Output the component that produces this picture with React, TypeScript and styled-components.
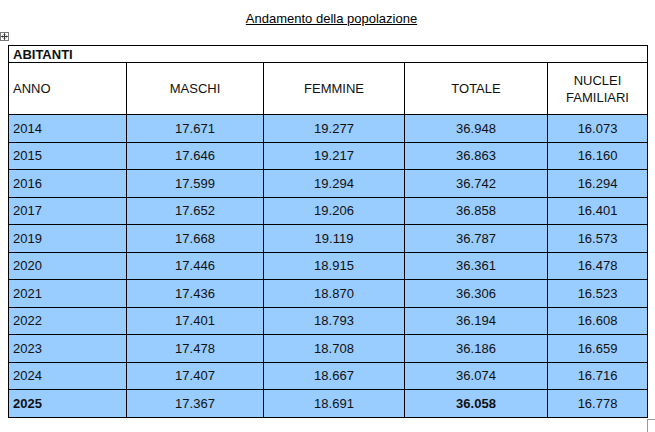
import React from "react";
import styled, { createGlobalStyle } from "styled-components";

type Row = {
  year: string;
  males: string;
  females: string;
  total: string;
  households: string;
  bold?: boolean;
};

const rows: Array<Row> = [
  { year: "2014", males: "17.671", females: "19.277", total: "36.948", households: "16.073" },
  { year: "2015", males: "17.646", females: "19.217", total: "36.863", households: "16.160" },
  { year: "2016", males: "17.599", females: "19.294", total: "36.742", households: "16.294" },
  { year: "2017", males: "17.652", females: "19.206", total: "36.858", households: "16.401" },
  { year: "2019", males: "17.668", females: "19.119", total: "36.787", households: "16.573" },
  { year: "2020", males: "17.446", females: "18.915", total: "36.361", households: "16.478" },
  { year: "2021", males: "17.436", females: "18.870", total: "36.306", households: "16.523" },
  { year: "2022", males: "17.401", females: "18.793", total: "36.194", households: "16.608" },
  { year: "2023", males: "17.478", females: "18.708", total: "36.186", households: "16.659" },
  { year: "2024", males: "17.407", females: "18.667", total: "36.074", households: "16.716" },
  { year: "2025", males: "17.367", females: "18.691", total: "36.058", households: "16.778", bold: true },
];

const GlobalStyle = createGlobalStyle`
  html, body {
    margin: 0;
    padding: 0;
    background: #ffffff;
  }
  body {
    font-family: "Liberation Sans", Arial, sans-serif;
    color: #000;
  }
`;

const Page = styled.div`
  position: relative;
  width: 655px;
  height: 432px;
  overflow: hidden;
  background: #fff;
`;

const Title = styled.div`
  height: 45px;
  padding-top: 11px;
  box-sizing: border-box;
  text-align: center;
  font-size: 13px;
  text-decoration: underline;
  padding-left: 8px;
`;

const Table = styled.table`
  margin-left: 8px;
  width: 639px;
  border-collapse: collapse;
  table-layout: fixed;
  font-size: 13px;
`;

const Cell = styled.td<{ $align?: "left" | "center"; $bold?: boolean; $blue?: boolean }>`
  border: 1px solid #000;
  padding: 0 4px;
  text-align: ${(p) => p.$align ?? "center"};
  font-weight: ${(p) => (p.$bold ? "bold" : "normal")};
  background: ${(p) => (p.$blue ? "#99ccff" : "#fff")};
  vertical-align: middle;
  line-height: 17px;
  white-space: nowrap;
  color: #111;
`;

const CaptionCell = styled(Cell)`
  line-height: 15px;
`;

const CaptionRow = styled.tr`
  height: 17px;
`;

const HeaderRow = styled.tr`
  height: 52px;
`;

const DataRow = styled.tr`
  height: 27.5px;
`;

const MoveHandle = styled.svg`
  position: absolute;
  left: 0;
  top: 32px;
`;

const ResizeHandle = styled.div`
  position: absolute;
  left: 647px;
  top: 419px;
  width: 10px;
  height: 14px;
  border-left: 1px solid #9a9a9a;
  border-top: 1px solid #9a9a9a;
`;

export default function App(): JSX.Element {
  return (
    <Page>
      <GlobalStyle />
      <Title>Andamento della popolazione</Title>
      <MoveHandle width="9" height="9" viewBox="0 0 9 9">
        <rect x="0.5" y="0.5" width="8" height="8" fill="#fff" stroke="#7a7a7a" />
        <path d="M4.5 1.5v6M1.5 4.5h6" stroke="#333" strokeWidth="1" />
        <path d="M4.5 1.5l-1 1M4.5 1.5l1 1M4.5 7.5l-1-1M4.5 7.5l1-1M1.5 4.5l1-1M1.5 4.5l1 1M7.5 4.5l-1-1M7.5 4.5l-1 1" stroke="#333" strokeWidth="0.8" />
      </MoveHandle>
      <Table>
        <colgroup>
          <col style={{ width: 118 }} />
          <col style={{ width: 137 }} />
          <col style={{ width: 141 }} />
          <col style={{ width: 143 }} />
          <col style={{ width: 100 }} />
        </colgroup>
        <tbody>
          <CaptionRow>
            <CaptionCell colSpan={5} $align="left" $bold>
              ABITANTI
            </CaptionCell>
          </CaptionRow>
          <HeaderRow>
            <Cell $align="left">ANNO</Cell>
            <Cell>MASCHI</Cell>
            <Cell>FEMMINE</Cell>
            <Cell>TOTALE</Cell>
            <Cell>
              NUCLEI
              <br />
              FAMILIARI
            </Cell>
          </HeaderRow>
          {rows.map((row) => (
            <DataRow key={row.year}>
              <Cell $align="left" $blue $bold={row.bold}>
                {row.year}
              </Cell>
              <Cell $blue>{row.males}</Cell>
              <Cell $blue>{row.females}</Cell>
              <Cell $blue $bold={row.bold}>
                {row.total}
              </Cell>
              <Cell $blue>{row.households}</Cell>
            </DataRow>
          ))}
        </tbody>
      </Table>
      <ResizeHandle />
    </Page>
  );
}
